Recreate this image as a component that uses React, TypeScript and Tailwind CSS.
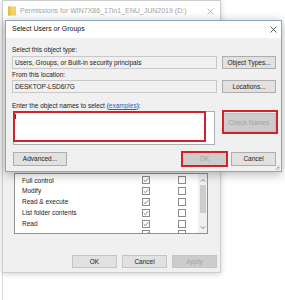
import React from "react"

const rows = ["Full control", "Modify", "Read & execute", "List folder contents", "Read", ""]

function Box({ checked }: { checked?: boolean }) {
  return (
    <div className="w-[8px] h-[8px] border border-[#8c8c8c] bg-white flex items-center justify-center">
      {checked && (
        <svg width="6" height="6" viewBox="0 0 6 6">
          <path d="M0.7 3.1 L2.3 4.7 L5.3 1.2" fill="none" stroke="#7a7a7a" strokeWidth="0.9" />
        </svg>
      )}
    </div>
  )
}

function Close({ color }: { color: string }) {
  return (
    <svg width="7" height="7" viewBox="0 0 7 7">
      <path d="M0.5 0.5 L6.5 6.5 M6.5 0.5 L0.5 6.5" stroke={color} strokeWidth="0.8" />
    </svg>
  )
}

export default function App() {
  return (
    <div className="relative w-[285px] h-[300px] bg-white overflow-hidden font-['Liberation_Sans',Arial,sans-serif] text-[6.5px] text-[#222]">
      {/* edge of another window behind */}
      <div className="absolute left-[2px] top-[273px] h-[27px] w-px bg-[#dcdcdc]" />

      {/* Permissions window (inactive) */}
      <div className="absolute left-[2px] top-0 w-[219px] h-[273px] flex flex-col bg-[#f0f0f0] border border-[#cdcdcd] shadow-[0_1px_6px_rgba(0,0,0,0.18)]">
        <div className="h-[20px] bg-white flex items-center pl-[5px] pr-[6px]">
          <svg width="8" height="10" viewBox="0 0 8 10">
            <rect x="0" y="0.5" width="8" height="9" fill="#f3d26b" />
            <rect x="0" y="0.5" width="2.5" height="9" fill="#e9bf47" />
          </svg>
          <span className="ml-[4px] text-[7px] text-[#a2a2a2] whitespace-nowrap">
            Permissions for WIN7X86_17in1_ENU_JUN2019 (D:)
          </span>
          <div className="ml-auto">
            <Close color="#a8a8a8" />
          </div>
        </div>

        <div className="flex-1 flex flex-col justify-end pl-[11px] pr-[3px] pb-[4px]">
          {/* permissions list */}
          <div className="w-[194px] h-[61px] border border-[#8f8f8f] bg-white flex overflow-hidden">
            <div className="flex-1 flex flex-col pt-[1px]">
              {rows.map((r, i) => (
                <div key={i} className="h-[10.8px] shrink-0 flex items-center">
                  <span className="pl-[7px] w-[127px] whitespace-nowrap">{r}</span>
                  <Box checked />
                  <div className="ml-[28px]">
                    <Box />
                  </div>
                </div>
              ))}
            </div>
            <div className="w-[9px] bg-[#f0f0f0] flex flex-col items-center">
              <svg width="6" height="9" viewBox="0 0 6 9" className="shrink-0 mt-[2px]">
                <path d="M1 5.5 L3 3.5 L5 5.5" fill="none" stroke="#606060" strokeWidth="0.8" />
              </svg>
              <div className="w-[6px] h-[28px] bg-[#cdcdcd]" />
              <div className="flex-1" />
              <svg width="6" height="9" viewBox="0 0 6 9" className="shrink-0 mb-[1px]">
                <path d="M1 3.5 L3 5.5 L5 3.5" fill="none" stroke="#606060" strokeWidth="0.8" />
              </svg>
            </div>
          </div>

          <div className="mt-[21px] flex justify-end gap-[5px]">
            <div className="w-[45px] h-[13px] bg-[#e1e1e1] border border-[#c4c4c4] flex items-center justify-center">OK</div>
            <div className="w-[45px] h-[13px] bg-[#e1e1e1] border border-[#c4c4c4] flex items-center justify-center">Cancel</div>
            <div className="w-[45px] h-[13px] bg-[#cccccc] border border-[#c4c4c4] text-[#a3a3a3] flex items-center justify-center">Apply</div>
          </div>
        </div>
      </div>

      {/* Select Users or Groups dialog */}
      <div className="absolute left-[5px] top-[20px] w-[277px] h-[152px] flex flex-col bg-[#f0f0f0] border border-[#8ba5bd] shadow-[0_2px_10px_rgba(0,0,0,0.3)]">
        <div className="h-[17px] bg-white flex items-center pl-[6px] pr-[4px]">
          <span className="text-[7px] text-[#111]">Select Users or Groups</span>
          <div className="ml-auto">
            <Close color="#333" />
          </div>
        </div>

        <div className="flex-1 flex flex-col pl-[6px] pr-[5px] pt-[7px] relative">
          <div className="leading-[9px]">Select this object type:</div>
          <div className="mt-[2px] flex gap-[5px]">
            <div className="flex-1 h-[13px] bg-[#f0f0f0] border border-[#c8c8c8] flex items-center pl-[2px]">
              Users, Groups, or Built-in security principals
            </div>
            <div className="w-[54px] h-[13px] bg-[#e1e1e1] border border-[#adadad] flex items-center justify-center">
              Object Types...
            </div>
          </div>

          <div className="mt-[1px] leading-[9px]">From this location:</div>
          <div className="mt-[1px] flex gap-[5px]">
            <div className="flex-1 h-[13px] bg-[#f0f0f0] border border-[#c8c8c8] flex items-center pl-[2px]">
              DESKTOP-LSD6I7G
            </div>
            <div className="w-[54px] h-[13px] bg-[#e1e1e1] border border-[#adadad] flex items-center justify-center">
              Locations...
            </div>
          </div>

          <div className="mt-[8px] leading-[9px]">
            Enter the object names to select (<span className="text-[#2a62c9] underline">examples</span>):
          </div>
          <div className="mt-[1px] flex gap-[5px]">
            <div className="relative flex-1 ml-[1px] mr-[2px] h-[34px] bg-white border border-[#abadb3]">
              <div className="ml-[1px] mt-[2px] w-px h-[5px] bg-[#444]" />
              <div className="absolute -left-[1px] -top-[1px] w-[193px] h-[31px] border-2 border-[#d2222b]" />
            </div>
            <div className="relative w-[54px]">
              <div className="mt-[2px] h-[19px] bg-[#cccccc] border border-[#bfbfbf] text-[#a3a3a3] flex items-center justify-center">
                Check Names
              </div>
              <div className="absolute left-0 -right-[2px] -top-[1px] h-[24px] border-2 border-[#d2222b]" />
            </div>
          </div>

          <div className="mt-[6px] flex items-center">
            <div className="ml-[1px] w-[54px] h-[14px] bg-[#e1e1e1] border border-[#adadad] flex items-center justify-center">
              Advanced...
            </div>
            <div className="ml-auto relative w-[47px] h-[16px] border-2 border-[#d2222b] bg-[#cccccc] text-[#a3a3a3] flex items-center justify-center">
              OK
            </div>
            <div className="ml-[3px] w-[45px] h-[14px] bg-[#e1e1e1] border border-[#adadad] flex items-center justify-center">
              Cancel
            </div>
          </div>

          <svg width="5" height="5" viewBox="0 0 5 5" className="absolute right-[1px] bottom-[1px]">
            <rect x="3.5" y="0.5" width="1" height="1" fill="#a0a0a0" />
            <rect x="2" y="2" width="1" height="1" fill="#a0a0a0" />
            <rect x="3.5" y="2" width="1" height="1" fill="#a0a0a0" />
            <rect x="0.5" y="3.5" width="1" height="1" fill="#a0a0a0" />
            <rect x="2" y="3.5" width="1" height="1" fill="#a0a0a0" />
            <rect x="3.5" y="3.5" width="1" height="1" fill="#a0a0a0" />
          </svg>
        </div>
      </div>
    </div>
  )
}
